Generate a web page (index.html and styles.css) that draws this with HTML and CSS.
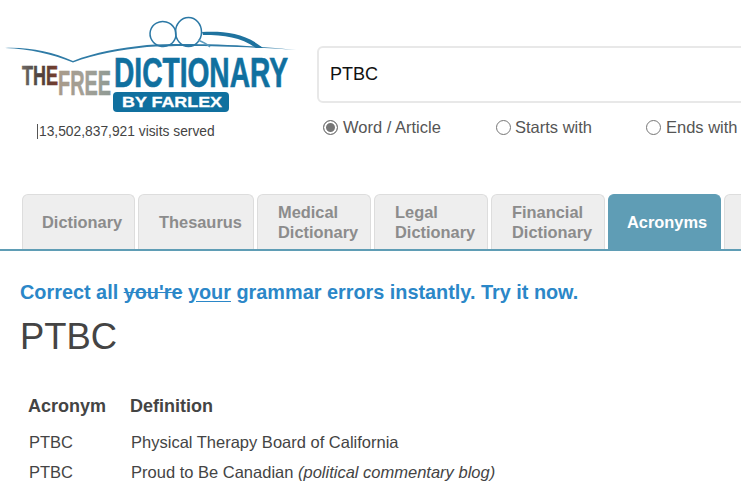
FILE: index.html
```html
<!DOCTYPE html>
<html lang="en">
<head>
  <meta charset="UTF-8">
  <title>PTBC - The Free Dictionary</title>
  <link rel="stylesheet" href="styles.css">
</head>
<body>
  <header class="top">
    <div class="brand">
      <svg class="logo" width="317" height="115" viewBox="0 0 317 115">
        <defs>
          <linearGradient id="theFill" x1="0" x2="1" y1="0" y2="0">
            <stop offset="0" stop-color="#6f6a66"/>
            <stop offset="0.5" stop-color="#4d3f3c"/>
            <stop offset="1" stop-color="#7a3d2c"/>
          </linearGradient>
          <linearGradient id="freeFill" x1="0" x2="1" y1="0" y2="0">
            <stop offset="0" stop-color="#a89a8a"/>
            <stop offset="0.5" stop-color="#a3a096"/>
            <stop offset="1" stop-color="#8f9a94"/>
          </linearGradient>
        </defs>
        <path d="M5 48 C30 47 52 52 73 61 C95 52 120 48 147 45 C180 43 240 44 296 50 C240 46 180 45 147 47 C120 50 95 54 73 62.5 C52 54 30 49 5 48Z" fill="#2f7ba6"/>
        <ellipse cx="163" cy="34" rx="13" ry="12.5" transform="rotate(15 163 34)" fill="none" stroke="#2b78a5" stroke-width="1.5"/>
        <ellipse cx="188.5" cy="32" rx="13" ry="14.5" fill="none" stroke="#2b78a5" stroke-width="1.5"/>
        <path d="M202 32 C225 31 245 33 263 48 L256 48 C240 37 225 35 203 35Z" fill="#1f739f"/>
        <path d="M198 40 C203 42 207 44 210 47" fill="none" stroke="#5d9bbd" stroke-width="1.4"/>
        <text class="logo-the" x="22" y="85" textLength="36" lengthAdjust="spacingAndGlyphs" fill="url(#theFill)" stroke="url(#theFill)">THE</text>
        <text class="logo-free" x="58" y="95" textLength="53" lengthAdjust="spacingAndGlyphs" fill="url(#freeFill)" stroke="url(#freeFill)">FREE</text>
        <text class="logo-dict" x="114" y="87" textLength="174" lengthAdjust="spacingAndGlyphs">DICTIONARY</text>
        <rect x="113" y="92" width="116" height="20" rx="4" fill="#10709f"/>
        <text class="logo-by" x="122" y="107" textLength="100" lengthAdjust="spacingAndGlyphs">BY FARLEX</text>
      </svg>
      <p class="visits">13,502,837,921 visits served</p>
    </div>
    <form class="search">
      <input class="search-box" type="text" value="PTBC">
      <div class="modes">
        <label class="mode mode-word"><input type="radio" name="mode" checked>Word / Article</label>
        <label class="mode mode-starts"><input type="radio" name="mode">Starts with</label>
        <label class="mode"><input type="radio" name="mode">Ends with</label>
      </div>
    </form>
  </header>

  <nav class="tabs">
    <a class="tab tab-dict">Dictionary</a>
    <a class="tab tab-thes">Thesaurus</a>
    <a class="tab tab-med">Medical<br>Dictionary</a>
    <a class="tab tab-legal">Legal<br>Dictionary</a>
    <a class="tab tab-fin">Financial<br>Dictionary</a>
    <a class="tab tab-acr active">Acronyms</a>
    <a class="tab tab-more"></a>
  </nav>

  <main class="content">
    <p class="promo">Correct all <s>you're</s> <u>your</u> grammar errors instantly. Try it now.</p>
    <h1>PTBC</h1>
    <table class="acronyms">
      <tr><th>Acronym</th><th>Definition</th></tr>
      <tr><td>PTBC</td><td>Physical Therapy Board of California</td></tr>
      <tr><td>PTBC</td><td>Proud to Be Canadian <i>(political commentary blog)</i></td></tr>
    </table>
  </main>
</body>
</html>
```

FILE: styles.css
```css
* { margin: 0; padding: 0; box-sizing: border-box; }
html, body { overflow: hidden; }
body { width: 741px; height: 486px; font-family: 'Liberation Sans', Arial, sans-serif; background: #fff; color: #444; }

/* Header */
.top { display: flex; height: 194px; }
.brand { width: 317px; flex: none; }
.logo { display: block; }
.logo text { font-family: 'Liberation Sans', Arial, sans-serif; font-weight: bold; }
.logo-the { font-size: 28px; stroke-width: 0.6px; }
.logo-free { font-size: 35px; stroke-width: 0.6px; }
.logo-dict { font-size: 42px; fill: #10709f; stroke: #10709f; stroke-width: 0.7px; }
.logo-by { font-size: 15px; fill: #fff; stroke: #fff; stroke-width: 0.3px; }
.visits { margin: 9px 0 0 37px; padding-left: 1px; border-left: 1px solid #555; font-size: 13.8px; line-height: 15px; width: 190px; }

.search { width: 460px; flex: none; padding-top: 46px; }
.search-box {
  display: block;
  width: 460px;
  height: 57px;
  padding: 0 11px;
  border: 2px solid #e8e8e8;
  border-radius: 6px;
  font: 18px 'Liberation Sans', Arial, sans-serif;
  color: #111;
}
.modes { display: flex; margin: 14px 0 0 6px; }
.mode { display: flex; align-items: center; font-size: 16.5px; line-height: 20px; color: #555; white-space: nowrap; }
.mode-word { width: 173px; }
.mode-starts { width: 150px; }
.mode input {
  appearance: none;
  width: 15px;
  height: 15px;
  margin-right: 5px;
  border: 1px solid #767676;
  border-radius: 50%;
  background: #fff;
}
.mode-starts input { margin-right: 4px; }
.mode input:checked { background: #777; box-shadow: inset 0 0 0 2px #fff; }

/* Tabs */
.tabs { display: flex; gap: 3px; height: 57px; padding-left: 22px; border-bottom: 2px solid #5f9db5; }
.tab {
  display: flex;
  flex: none;
  align-items: center;
  height: 55px;
  padding: 0 0 0 20px;
  background: #eee;
  border: 1px solid #ddd;
  border-bottom: none;
  border-radius: 6px 6px 0 0;
  font-size: 16.4px;
  font-weight: bold;
  line-height: 20px;
  color: #8c8c8c;
}
.tab-dict { width: 113px; padding-left: 19px; }
.tab-thes { width: 116px; }
.tab-med { width: 114px; }
.tab-legal { width: 114px; }
.tab-fin { width: 114px; }
.tab-acr { width: 113px; padding-left: 18px; }
.tab-more { width: 40px; }
.tab.active { background: #5f9db5; border-color: #5f9db5; color: #fff; }

/* Content */
.content { padding: 30px 0 0 20px; }
.promo { font-size: 19.85px; font-weight: bold; line-height: 22px; color: #2b87c8; }
.promo u { text-underline-offset: 2px; }
h1 { margin-top: 13px; font-size: 36.4px; font-weight: normal; line-height: 42px; color: #444; }
.acronyms { margin: 38px 0 0 8px; border-collapse: collapse; font-size: 16.5px; }
.acronyms th { padding: 0 24px 17px 0; font-size: 18px; line-height: 20px; text-align: left; }
.acronyms td { padding: 0 24px 11px 1px; line-height: 19px; }
```
